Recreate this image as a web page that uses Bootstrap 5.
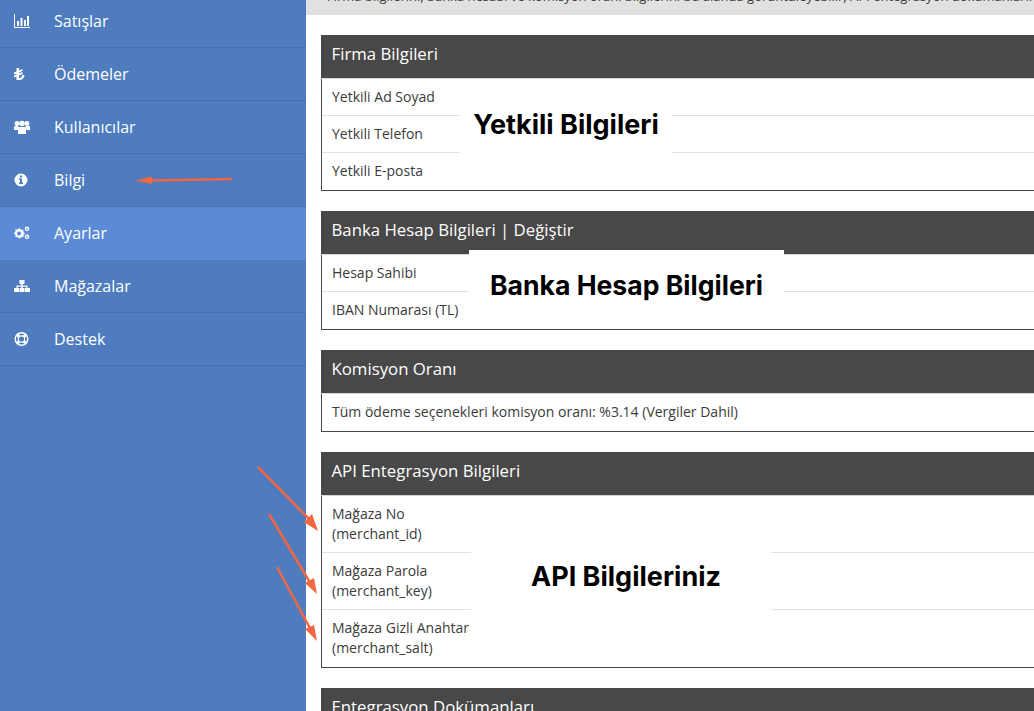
<!DOCTYPE html>
<html lang="tr">
<head>
<meta charset="utf-8">
<title>Bilgi</title>
<link href="https://cdn.jsdelivr.net/npm/bootstrap@5.3.0/dist/css/bootstrap.min.css" rel="stylesheet">
<style>
html,body{height:711px;overflow:hidden;margin:0;}
body{font-family:"Open Sans","Noto Sans",sans-serif;color:#3b3b3b;background:#fff;}
.shell{height:711px;width:1034px;overflow:hidden;}
.side{width:306px;flex:none;background:#4e7cbf;}
.side-item{height:53px;border-bottom:1px solid #4670ad;color:#fff;font-size:16px;padding-left:14px;text-decoration:none;}
.side-item:first-child{height:48px;padding-bottom:5px;}
.side-item.on{background:#5b8bd6;border-bottom-color:#5b8bd6;}
.side-ico{width:16px;height:16px;margin-right:24px;fill:#fff;flex:none;}
.buoy{fill:none;stroke:#fff;}
.main{flex:1;min-width:0;position:relative;}
.topband{height:15px;background:#e1e1e1;overflow:hidden;white-space:nowrap;font-size:13px;line-height:20px;padding-left:21px;}
.topband span{display:block;margin-top:-14px;}
.panels{padding:20px 0 0 15px;width:760px;}
.pnl{border:1px solid #484848;border-top:0;margin-bottom:20px;}
.pnl-head{height:44px;background:#484848;color:#fff;font-size:16.800px;padding:0 0 5px 10.500px;margin:0 -1px;border-bottom:1px solid #d5d5d5;}
.pnl-row{font-size:14px;line-height:20px;padding:8px 10px;border-bottom:1px solid #e2e2e2;height:37px;}
.pnl-row:last-child{border-bottom:0;}
.pnl-row.tall{height:57px;}
.mask{position:absolute;background:#fff;color:#000;font-family:Inter,"Liberation Sans",sans-serif;font-weight:700;white-space:nowrap;}
.mask-a{font-size:27px;left:154px;top:95px;width:212px;height:58px;padding-top:2px;}
.mask-b{font-size:26.600px;left:163px;top:250px;width:315px;height:72px;}
.mask-c{font-size:27px;left:165px;top:497px;width:300px;height:160px;padding-left:10px;}
.arrows{position:absolute;left:0;top:0;width:1034px;height:711px;pointer-events:none;}
</style>
</head>
<body>
<div class="shell d-flex">
  <nav class="side d-flex flex-column">
    <a class="side-item d-flex align-items-center" href="#"><svg class="side-ico" viewBox="0 0 16 16"><path d="M0 1h1v13h15v1H0z"/><path d="M3 8h2v5H3zM6.500 5h2v8h-2zM10 7h2v6h-2zM13 3h2v10h-2z"/></svg>Satışlar</a>
    <a class="side-item d-flex align-items-center" href="#"><svg class="side-ico" viewBox="0 0 16 16"><path transform="translate(-2.500 0)" d="M5 2h2.500v2.500L11 3v2L7.500 6.500v1L11 6v2L7.500 9.500V12c2 0 3-1.200 3.200-3H13c-.2 3.500-2.500 5-5.500 5H5V10.500L2.500 11.500v-2L5 8.500v-1L2.500 8.500v-2L5 5.500z"/></svg>Ödemeler</a>
    <a class="side-item d-flex align-items-center" href="#"><svg class="side-ico" viewBox="0 0 16 16"><circle cx="3" cy="4.500" r="2.400"/><circle cx="13" cy="4.500" r="2.400"/><circle cx="8" cy="4.500" r="2.800"/><path d="M0 8c0-1 1-1.300 2-1.300h2l.5 1L3.500 11H0zM16 8c0-1-1-1.300-2-1.300h-2l-.5 1 1 3.300H16zM5.500 8h5c1 0 1.500.8 1.500 1.800V15H4V9.800C4 8.800 4.500 8 5.500 8z"/></svg>Kullanıcılar</a>
    <a class="side-item d-flex align-items-center" href="#"><svg class="side-ico" viewBox="0 0 16 16"><path fill-rule="evenodd" d="M7 1.500a6.500 6.500 0 1 1 0 13 6.500 6.500 0 0 1 0-13zM5.800 3.500v2h2.400v-2zM5 6.500V8h1v2.500H5V12h4v-1.500H8v-4z"/></svg>Bilgi</a>
    <a class="side-item on d-flex align-items-center" href="#"><svg class="side-ico" viewBox="0 0 16 16"><path fill-rule="evenodd" d="M5.500 4l1 .2.400 1 1 .4 1-.4.800.8-.4 1 .4 1 1 .4v1.200l-1 .4-.4 1 .4 1-.8.800-1-.4-1 .4-.4 1H4.400l-.4-1-1-.4-1 .4-.8-.8.400-1-.4-1-1-.4V8l1-.4.400-1-.4-1 .8-.8 1 .4 1-.4.400-1zM5 7a2 2 0 1 0 0 4 2 2 0 0 0 0-4z" transform="translate(0 -.5)"/><path fill-rule="evenodd" d="M13 1.500a2.300 2.300 0 1 1 0 4.600 2.300 2.300 0 0 1 0-4.600zm0 1.400a.9.9 0 1 0 0 1.800.9.9 0 0 0 0-1.800zM13 9.500a2.300 2.300 0 1 1 0 4.600 2.300 2.300 0 0 1 0-4.600zm0 1.400a.9.9 0 1 0 0 1.800.9.9 0 0 0 0-1.800z"/></svg>Ayarlar</a>
    <a class="side-item d-flex align-items-center" href="#"><svg class="side-ico" viewBox="0 0 16 16"><path d="M5.500 2h5v4h-5zM7.300 6h1.400v2H7.300z"/><path d="M2.500 7.500h11V10h-1.200V8.700H8.700V10H7.300V8.700H3.700V10H2.500z"/><path d="M0 10h5v4H0zM5.500 10h5v4h-5zM11 10h5v4h-5z"/></svg>Mağazalar</a>
    <a class="side-item d-flex align-items-center" href="#"><svg class="side-ico" viewBox="0 0 16 16"><g class="buoy"><circle cx="7.500" cy="8" r="6.300" stroke-width="1.400"/><circle cx="7.500" cy="8" r="3.200" stroke-width="1.200"/><path stroke-width="3" d="M5.200 5.700L3.100 3.600M9.800 5.700l2.100-2.100M5.200 10.300l-2.100 2.100M9.800 10.300l2.100 2.100"/></g></svg>Destek</a>
  </nav>
  <main class="main">
    <div class="topband"><span>Firma bilgilerini, banka hesabı ve komisyon oranı bilgilerini bu alanda görüntüleyebilir, API entegrasyon dokümanlarını inceleyebilirsiniz.</span></div>
    <div class="panels">
      <section class="pnl">
        <div class="pnl-head d-flex align-items-center">Firma Bilgileri</div>
        <div class="pnl-row">Yetkili Ad Soyad</div>
        <div class="pnl-row">Yetkili Telefon</div>
        <div class="pnl-row">Yetkili E-posta</div>
      </section>
      <section class="pnl">
        <div class="pnl-head d-flex align-items-center">Banka Hesap Bilgileri | Değiştir</div>
        <div class="pnl-row">Hesap Sahibi</div>
        <div class="pnl-row">IBAN Numarası (TL)</div>
      </section>
      <section class="pnl">
        <div class="pnl-head d-flex align-items-center">Komisyon Oranı</div>
        <div class="pnl-row">Tüm ödeme seçenekleri komisyon oranı: %3.14 (Vergiler Dahil)</div>
      </section>
      <section class="pnl">
        <div class="pnl-head d-flex align-items-center">API Entegrasyon Bilgileri</div>
        <div class="pnl-row tall">Mağaza No<br>(merchant_id)</div>
        <div class="pnl-row tall">Mağaza Parola<br>(merchant_key)</div>
        <div class="pnl-row tall">Mağaza Gizli Anahtar<br>(merchant_salt)</div>
      </section>
      <section class="pnl">
        <div class="pnl-head d-flex align-items-center">Entegrasyon Dokümanları</div>
      </section>
    </div>
    <div class="mask mask-a d-flex align-items-center justify-content-center">Yetkili Bilgileri</div>
    <div class="mask mask-b d-flex align-items-center justify-content-center">Banka Hesap Bilgileri</div>
    <div class="mask mask-c d-flex align-items-center justify-content-center">API Bilgileriniz</div>
  </main>
</div>
<svg class="arrows" viewBox="0 0 1034 711">
  <g fill="#f4663f" stroke="#f4663f">
    <path d="M232 179L150 180.500" stroke-width="2.500" fill="none"/><path d="M135 180.500L152 176.500V184z" stroke="none"/>
    <path d="M258 467L311 521" stroke-width="2.500" fill="none"/><path d="M318 531L304 522L312 514z" stroke="none"/>
    <path d="M269 514L312 586" stroke-width="2.500" fill="none"/><path d="M317 594L305 583L314 578z" stroke="none"/>
    <path d="M277 567L312 632" stroke-width="2.500" fill="none"/><path d="M317 641L305 629L314 625z" stroke="none"/>
  </g>
</svg>
</body>
</html>
